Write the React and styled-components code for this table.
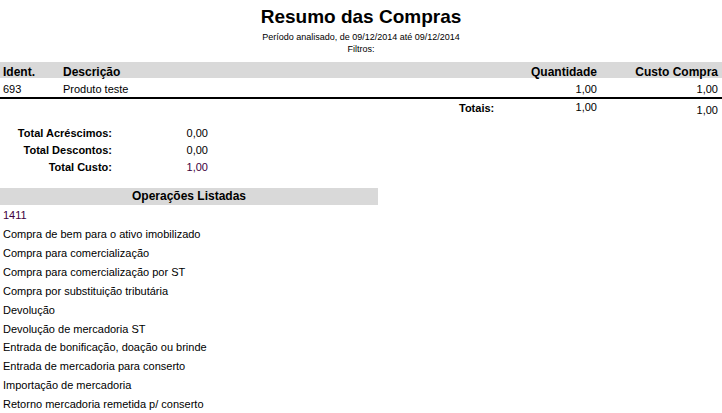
import React from 'react';
import styled, { createGlobalStyle } from 'styled-components';

const GlobalStyle = createGlobalStyle`
    html, body {
        margin: 0;
        padding: 0;
        background: #ffffff;
    }
    body {
        font-family: "Liberation Sans", Arial, sans-serif;
        color: #000000;
    }
`;

const accent = '#400040';

const items = [
    { id: '693', desc: 'Produto teste', qty: '1,00', cost: '1,00' },
];

const summary = [
    { label: 'Total Acréscimos:', value: '0,00' },
    { label: 'Total Descontos:', value: '0,00' },
    { label: 'Total Custo:', value: '1,00', highlight: true },
];

const operations = [
    '1411',
    'Compra de bem para o ativo imobilizado',
    'Compra para comercialização',
    'Compra para comercialização por ST',
    'Compra por substituição tributária',
    'Devolução',
    'Devolução de mercadoria ST',
    'Entrada de bonificação, doação ou brinde',
    'Entrada de mercadoria para conserto',
    'Importação de mercadoria',
    'Retorno mercadoria remetida p/ conserto',
];

const Page = styled.div`
    width: 722px;
    height: 413px;
    overflow: hidden;
    display: flex;
    flex-direction: column;
`;

const Header = styled.header`
    display: flex;
    flex-direction: column;
    align-items: center;
    padding-top: 6px;
`;

const Title = styled.h1`
    margin: 0;
    font-size: 19px;
    line-height: 22px;
    font-weight: bold;
`;

const SubTitle = styled.div`
    font-size: 9px;
    line-height: 12px;
    margin-top: ${({ gap }) => gap || 0}px;
`;

const Table = styled.div`
    margin-top: 7px;
`;

const Row = styled.div`
    display: grid;
    grid-template-columns: 60px 1fr 120px 121px;
    padding: 0 4px 0 3px;
`;

const HeadRow = styled(Row)`
    background-color: #d9d9d9;
    height: 16px;
    box-sizing: border-box;
    padding-top: 4px;
    font-size: 12px;
    line-height: 12px;
    font-weight: bold;
`;

const BodyRow = styled(Row)`
    height: 21px;
    box-sizing: border-box;
    padding-top: 3px;
    font-size: 11px;
    line-height: 16px;
    border-bottom: 2px solid #000000;
`;

const Cell = styled.div`
    text-align: ${({ right }) => right ? 'right' : 'left'};
    white-space: nowrap;
`;

const TotalsRow = styled.div`
    display: grid;
    grid-template-columns: auto 1fr 121px;
    padding: 0 4px 0 459px;
    height: 18px;
    font-size: 11px;
    line-height: 14px;
`;

const TotalsCell = styled.div`
    padding-top: ${({ offset }) => offset}px;
    text-align: ${({ right }) => right ? 'right' : 'left'};
    font-weight: ${({ bold }) => bold ? 'bold' : 'normal'};
`;

const Summary = styled.div`
    display: grid;
    grid-template-columns: 112px 96px;
    grid-auto-rows: 17px;
    margin-top: 8px;
    font-size: 11px;
    line-height: 17px;
`;

const SummaryLabel = styled.div`
    text-align: right;
    font-weight: bold;
`;

const SummaryValue = styled.div`
    text-align: right;
    color: ${({ highlight }) => highlight ? accent : '#000000'};
`;

const Section = styled.section`
    margin-top: 12px;
    width: 378px;
`;

const SectionTitle = styled.div`
    background-color: #d9d9d9;
    height: 17px;
    font-size: 12px;
    line-height: 17px;
    font-weight: bold;
    text-align: center;
`;

const List = styled.ul`
    margin: 0;
    padding: 0 0 0 3px;
    list-style: none;
`;

const ListItem = styled.li`
    height: 18.93px;
    font-size: 11px;
    line-height: 20px;
    white-space: nowrap;
    color: ${({ highlight }) => highlight ? accent : '#000000'};
`;

const App = () => {
    return (
        <Page>
            <GlobalStyle />
            <Header>
                <Title>Resumo das Compras</Title>
                <SubTitle gap={3}>Período analisado, de 09/12/2014 até 09/12/2014</SubTitle>
                <SubTitle>Filtros:</SubTitle>
            </Header>
            <Table>
                <HeadRow>
                    <Cell>Ident.</Cell>
                    <Cell>Descrição</Cell>
                    <Cell right>Quantidade</Cell>
                    <Cell right>Custo Compra</Cell>
                </HeadRow>
                {
                    items.map(({ id, desc, qty, cost }) => (
                        <BodyRow key={id}>
                            <Cell>{id}</Cell>
                            <Cell>{desc}</Cell>
                            <Cell right>{qty}</Cell>
                            <Cell right>{cost}</Cell>
                        </BodyRow>
                    ))
                }
                <TotalsRow>
                    <TotalsCell offset={2} bold>Totais:</TotalsCell>
                    <TotalsCell offset={1} right>1,00</TotalsCell>
                    <TotalsCell offset={4} right>1,00</TotalsCell>
                </TotalsRow>
            </Table>
            <Summary>
                {
                    summary.map(({ label, value, highlight }) => (
                        <React.Fragment key={label}>
                            <SummaryLabel>{label}</SummaryLabel>
                            <SummaryValue highlight={highlight}>{value}</SummaryValue>
                        </React.Fragment>
                    ))
                }
            </Summary>
            <Section>
                <SectionTitle>Operações Listadas</SectionTitle>
                <List>
                    {
                        operations.map((op, index) => (
                            <ListItem key={op} highlight={index === 0}>{op}</ListItem>
                        ))
                    }
                </List>
            </Section>
        </Page>
    );
};

export default App;
